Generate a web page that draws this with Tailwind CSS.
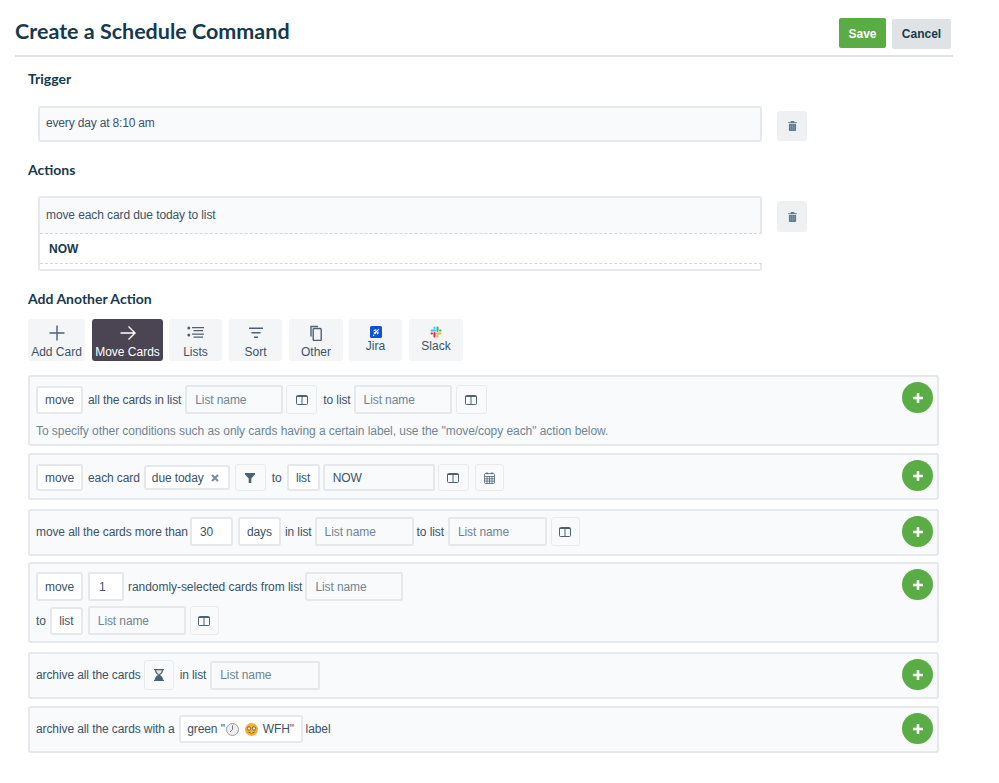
<!DOCTYPE html>
<html lang="en">
  <head>
    <meta charset="UTF-8" />
    <meta name="viewport" content="width=device-width, initial-scale=1.0" />
    <script src="https://cdn.jsdelivr.net/npm/@tailwindcss/browser@4"></script>
    <title>Create a Schedule Command</title>
  </head>
  <body class="bg-white font-['Liberation_Sans',Arial,sans-serif] text-[12px] tracking-[-0.1px] leading-[16px] text-[#3b5366] w-[999px] h-[783px] overflow-hidden">
    <!-- Header -->
    <header class="ml-[15px] w-[938px] h-[57px] border-b-2 border-[#e2e3e5] flex justify-between">
      <h1 class="font-['Lato',sans-serif] font-bold text-[21.5px] tracking-normal leading-[28px] text-[#17394d] mt-[17px]">Create a Schedule Command</h1>
      <div class="flex mr-[2px] tracking-normal">
        <button class="w-[47px] h-[30px] mt-[18px] pt-[1px] rounded-[2px] bg-[#5aac44] text-white font-bold text-[12px]">Save</button>
        <button class="w-[59px] h-[30px] mt-[19px] ml-[6px] rounded-[2px] bg-[#e0e3e6] text-[#17394d] font-bold text-[12px]">Cancel</button>
      </div>
    </header>

    <main class="pl-[28px]">
      <!-- Trigger -->
      <h2 class="font-['Lato',sans-serif] font-bold text-[14px] tracking-normal leading-[18px] text-[#17394d] pt-[13px]">Trigger</h2>
      <div class="flex mt-[18px] ml-[10px]">
        <div class="w-[724px] h-[36px] border-2 border-[#e6e8ec] rounded-[3px] bg-[#f9fafc] pl-[6px] pt-[7px] tracking-[-0.17px]">every day at 8:10 am</div>
        <button class="w-[30px] h-[30px] mt-[5px] ml-[15px] rounded-[2px] bg-[#eef0f2] flex items-center justify-center">
          <svg width="9" height="10" viewBox="0 0 10 11" fill="#5f7c90"><path d="M3.200 0h3.600l.5 1.200H10v1H0v-1h2.700zM1 3h8v7a1 1 0 0 1-1 1H2a1 1 0 0 1-1-1z" /><path d="M3 4v5.500M5 4v5.500M7 4v5.500" stroke="#8fa4b3" stroke-width=".7" /></svg>
        </button>
      </div>

      <!-- Actions -->
      <h2 class="font-['Lato',sans-serif] font-bold text-[14px] tracking-normal leading-[18px] text-[#17394d] mt-[19px]">Actions</h2>
      <div class="flex mt-[17px] ml-[10px]">
        <div class="w-[724px] h-[75px] border-2 border-[#e6e8ec] rounded-[3px] bg-white">
          <div class="h-[36px] bg-[#f9fafc] border-b border-r-2 border-dashed border-b-[#d5d8dd] border-r-[#e6e8ec] [border-right-style:solid] pl-[6px] pt-[9px] -mr-[2px]">move each card due today to list</div>
          <div class="h-[30px] bg-white border-b border-dashed border-[#d5d8dd] pl-[9px] pt-[7px] font-bold text-[12px] tracking-normal text-[#17394d] -mr-[2px]">NOW</div>
        </div>
        <button class="w-[30px] h-[31px] mt-[5px] ml-[15px] rounded-[2px] bg-[#eef0f2] flex items-center justify-center">
          <svg width="9" height="10" viewBox="0 0 10 11" fill="#5f7c90"><path d="M3.200 0h3.600l.5 1.200H10v1H0v-1h2.700zM1 3h8v7a1 1 0 0 1-1 1H2a1 1 0 0 1-1-1z" /><path d="M3 4v5.500M5 4v5.500M7 4v5.500" stroke="#8fa4b3" stroke-width=".7" /></svg>
        </button>
      </div>

      <!-- Add another action -->
      <h2 class="font-['Lato',sans-serif] font-bold text-[14px] tracking-normal leading-[18px] text-[#17394d] mt-[19px]">Add Another Action</h2>
      <div class="flex mt-[11px] h-[42px] tracking-normal">
        <button class="w-[57px] rounded-[3px] bg-[#f4f5f6] flex flex-col items-center pt-[6px]">
          <svg width="16" height="16" viewBox="0 0 16 16" fill="none" stroke="#4c6274" stroke-width="1.400"><path d="M8 .5v15M.5 8h15" /></svg>
          <span class="mt-[3px]">Add Card</span>
        </button>
        <button class="w-[71px] ml-[7px] rounded-[3px] bg-[#4a4453] text-white flex flex-col items-center pt-[6px]">
          <svg width="16" height="16" viewBox="0 0 16 16" fill="none" stroke="#fff" stroke-width="1.400"><path d="M.5 8h14.500M8.500 1.500 15 8l-6.500 6.500" /></svg>
          <span class="mt-[3px]">Move Cards</span>
        </button>
        <button class="w-[53px] ml-[6px] rounded-[3px] bg-[#f4f5f6] flex flex-col items-center pt-[6px]">
          <svg width="17" height="16" viewBox="0 0 17 16" fill="#4c6274"><circle cx="1.800" cy="3" r="1.500" /><circle cx="1.800" cy="10" r="1.500" /><path d="M5 2h12v1.300H5zM6.500 5h9.500v1.200H6.500zM5 8.500h12v1.300H5zM6.500 11.500h9.500v1.200H6.500z" /></svg>
          <span class="mt-[3px]">Lists</span>
        </button>
        <button class="w-[53px] ml-[7px] rounded-[3px] bg-[#f4f5f6] flex flex-col items-center pt-[6px]">
          <svg width="16" height="16" viewBox="0 0 16 16" fill="#4c6274"><path d="M1 2.500h14v1.500H1zM3.500 7h9v1.500h-9zM6 11.500h4V13H6z" /></svg>
          <span class="mt-[3px]">Sort</span>
        </button>
        <button class="w-[54px] ml-[7px] rounded-[3px] bg-[#f4f5f6] flex flex-col items-center pt-[6px]">
          <svg width="16" height="16" viewBox="0 0 16 16" fill="none" stroke="#4c6274" stroke-width="1.400"><path d="M3 11.500V1.500h7" /><rect x="5.200" y="3.500" width="8" height="12" rx="1" /></svg>
          <span class="mt-[3px]">Other</span>
        </button>
        <button class="w-[53px] ml-[6px] rounded-[3px] bg-[#f4f5f6] flex flex-col items-center pt-[7px]">
          <svg width="12" height="12" viewBox="0 0 12 12"><rect width="12" height="12" rx="1.500" fill="#0f52d1" /><path d="M3.500 7 8.500 3 9.300 2.700 9 3.500 5 8.500zM3.600 8.400l1 1-2 .9zM7.200 6.200 8.800 5.500 8.200 8 6.800 8.800zM5.800 4.800 6.500 3.200 4 3.800 3.200 5.200z" fill="#fff" /></svg>
          <span>Jira</span>
        </button>
        <button class="w-[54px] ml-[7px] rounded-[3px] bg-[#f4f5f6] flex flex-col items-center pt-[7px]">
          <svg width="12" height="12" viewBox="0 0 12 12" fill="none" stroke-width="2" stroke-linecap="round"><path d="M1.500 4.500H5M4.500 1.500V2" stroke="#36c5f0" /><path d="M7.500 1.500V5M10.500 4.500H10" stroke="#2eb67d" /><path d="M7 7.500h3.500M7.500 10.500V10" stroke="#ecb22e" /><path d="M4.500 7v3.500M1.500 7.500H2" stroke="#e01e5a" /></svg>
          <span>Slack</span>
        </button>
      </div>

      <div class="w-[911px] mt-[14px] flex flex-col">
        <!-- Row 1 -->
        <section class="h-[71px] border-2 border-[#e6e8ec] rounded-[3px] bg-[#f9fafc] flex justify-between pl-[6px] pr-[4px] pt-[8px]">
          <div>
            <div class="flex items-center">
              <span class="w-[47px] h-[28px] rounded-[3px] border-2 border-[#e6e8ec] bg-white flex items-center justify-center">move</span>
              <span class="ml-[5px]">all the cards in list</span>
              <span class="w-[98px] h-[29px] ml-[4px] rounded-[2px] border-2 border-[#e6e8ec] bg-[#f9fafc] pl-[8px] flex items-center text-[#6f8594]">List name</span>
              <span class="w-[31px] h-[29px] ml-[3px] rounded-[3px] border border-[#e8eaed] flex items-center justify-center">
                <svg width="12" height="10" viewBox="0 0 12 10" fill="none" stroke="#4c6274" stroke-width="1"><rect x=".5" y=".5" width="11" height="9" rx="1" /><path d="M6 .5v9M.5 1.500h11" /></svg>
              </span>
              <span class="ml-[6px]">to list</span>
              <span class="w-[98px] h-[29px] ml-[3px] rounded-[2px] border-2 border-[#e6e8ec] bg-[#f9fafc] pl-[8px] flex items-center text-[#6f8594]">List name</span>
              <span class="w-[31px] h-[29px] ml-[4px] rounded-[3px] border border-[#e8eaed] flex items-center justify-center">
                <svg width="12" height="10" viewBox="0 0 12 10" fill="none" stroke="#4c6274" stroke-width="1"><rect x=".5" y=".5" width="11" height="9" rx="1" /><path d="M6 .5v9M.5 1.500h11" /></svg>
              </span>
            </div>
            <p class="mt-[9px] tracking-[-0.06px] text-[#6f8594]">To specify other conditions such as only cards having a certain label, use the "move/copy each" action below.</p>
          </div>
          <button class="w-[31px] h-[31px] -mt-[3px] rounded-full bg-[#5aac44] flex items-center justify-center shrink-0">
            <svg width="10" height="10" viewBox="0 0 10 10" fill="#fff"><path d="M3.700 0h2.600v3.700H10v2.600H6.300V10H3.700V6.300H0V3.700h3.700z" /></svg>
          </button>
        </section>

        <!-- Row 2 -->
        <section class="h-[47px] mt-[7px] border-2 border-[#e6e8ec] rounded-[3px] bg-[#f9fafc] flex justify-between items-start pl-[6px] pr-[4px] pt-[9px]">
          <div class="flex items-center">
            <span class="w-[47px] h-[27px] rounded-[3px] border-2 border-[#e6e8ec] bg-white flex items-center justify-center">move</span>
            <span class="ml-[5px]">each card</span>
            <span class="w-[86px] h-[25px] ml-[4px] rounded-[3px] border-2 border-[#e6e8ec] bg-white pl-[6px] flex items-center">due today
              <svg class="ml-[7px]" width="8" height="8" viewBox="0 0 8 8" stroke="#7d8f9c" stroke-width="2.200"><path d="M1 1l6 6M7 1 1 7" /></svg>
            </span>
            <span class="w-[31px] h-[27px] ml-[5px] rounded-[3px] border border-[#e8eaed] flex items-center justify-center">
              <svg width="10" height="10" viewBox="0 0 10 10" fill="#4c6274"><path d="M0 0h10v1.500L6.300 5.500V10H3.700V5.500L0 1.500z" /></svg>
            </span>
            <span class="ml-[6px]">to</span>
            <span class="w-[33px] h-[27px] ml-[5px] rounded-[3px] border-2 border-[#e6e8ec] bg-white flex items-center justify-center">list</span>
            <span class="w-[112px] h-[27px] ml-[3px] rounded-[2px] border-2 border-[#e6e8ec] bg-[#f9fafc] pl-[8px] flex items-center">NOW</span>
            <span class="w-[31px] h-[27px] ml-[3px] rounded-[3px] border border-[#e8eaed] flex items-center justify-center">
              <svg width="12" height="10" viewBox="0 0 12 10" fill="none" stroke="#4c6274" stroke-width="1"><rect x=".5" y=".5" width="11" height="9" rx="1" /><path d="M6 .5v9M.5 1.500h11" /></svg>
            </span>
            <span class="w-[29px] h-[27px] ml-[6px] rounded-[3px] border border-[#e8eaed] flex items-center justify-center">
              <svg width="11" height="12" viewBox="0 0 11 12" fill="none" stroke="#4c6274" stroke-width=".8"><rect x=".5" y="1.500" width="10" height="10" rx="1" /><path d="M.5 4.500h10M.5 6.800h10M.5 9.100h10M3 4.500v7M5.500 4.500v7M8 4.500v7M3 0v2.500M8 0v2.500" /></svg>
            </span>
          </div>
          <button class="w-[31px] h-[31px] -mt-[4px] rounded-full bg-[#5aac44] flex items-center justify-center shrink-0">
            <svg width="10" height="10" viewBox="0 0 10 10" fill="#fff"><path d="M3.700 0h2.600v3.700H10v2.600H6.300V10H3.700V6.300H0V3.700h3.700z" /></svg>
          </button>
        </section>

        <!-- Row 3 -->
        <section class="h-[47px] mt-[9px] border-2 border-[#e6e8ec] rounded-[3px] bg-[#f9fafc] flex justify-between items-start pl-[6px] pr-[4px] pt-[6px]">
          <div class="flex items-center">
            <span>move all the cards more than</span>
            <span class="w-[43px] h-[29px] ml-[2px] rounded-[2px] border-2 border-[#e6e8ec] bg-white pl-[8px] flex items-center">30</span>
            <span class="w-[43px] h-[29px] ml-[5px] rounded-[3px] border-2 border-[#e6e8ec] bg-white flex items-center justify-center">days</span>
            <span class="ml-[4px]">in list</span>
            <span class="w-[99px] h-[29px] ml-[3px] rounded-[2px] border-2 border-[#e6e8ec] bg-[#f9fafc] pl-[8px] flex items-center text-[#6f8594]">List name</span>
            <span class="ml-[3px]">to list</span>
            <span class="w-[99px] h-[29px] ml-[4px] rounded-[2px] border-2 border-[#e6e8ec] bg-[#f9fafc] pl-[8px] flex items-center text-[#6f8594]">List name</span>
            <span class="w-[29px] h-[29px] ml-[4px] rounded-[3px] border border-[#e8eaed] flex items-center justify-center">
              <svg width="12" height="10" viewBox="0 0 12 10" fill="none" stroke="#4c6274" stroke-width="1"><rect x=".5" y=".5" width="11" height="9" rx="1" /><path d="M6 .5v9M.5 1.500h11" /></svg>
            </span>
          </div>
          <button class="w-[31px] h-[31px] -mt-[1px] rounded-full bg-[#5aac44] flex items-center justify-center shrink-0">
            <svg width="10" height="10" viewBox="0 0 10 10" fill="#fff"><path d="M3.700 0h2.600v3.700H10v2.600H6.300V10H3.700V6.300H0V3.700h3.700z" /></svg>
          </button>
        </section>

        <!-- Row 4 -->
        <section class="h-[81px] mt-[6px] border-2 border-[#e6e8ec] rounded-[3px] bg-[#f9fafc] flex justify-between items-start pl-[6px] pr-[4px] pt-[8px]">
          <div>
            <div class="flex items-center">
              <span class="w-[47px] h-[29px] rounded-[3px] border-2 border-[#e6e8ec] bg-white flex items-center justify-center">move</span>
              <span class="w-[36px] h-[29px] ml-[5px] rounded-[2px] border-2 border-[#e6e8ec] bg-white pl-[9px] flex items-center">1</span>
              <span class="ml-[4px] tracking-[-0.05px]">randomly-selected cards from list</span>
              <span class="w-[98px] h-[29px] ml-[3px] rounded-[2px] border-2 border-[#e6e8ec] bg-[#f9fafc] pl-[8px] flex items-center text-[#6f8594]">List name</span>
            </div>
            <div class="flex items-center mt-[5px]">
              <span>to</span>
              <span class="w-[33px] h-[28px] ml-[4px] rounded-[3px] border-2 border-[#e6e8ec] bg-white flex items-center justify-center">list</span>
              <span class="w-[98px] h-[29px] ml-[5px] rounded-[2px] border-2 border-[#e6e8ec] bg-[#f9fafc] pl-[8px] flex items-center text-[#6f8594]">List name</span>
              <span class="w-[29px] h-[29px] ml-[4px] rounded-[3px] border border-[#e8eaed] flex items-center justify-center">
                <svg width="12" height="10" viewBox="0 0 12 10" fill="none" stroke="#4c6274" stroke-width="1"><rect x=".5" y=".5" width="11" height="9" rx="1" /><path d="M6 .5v9M.5 1.500h11" /></svg>
              </span>
            </div>
          </div>
          <button class="w-[31px] h-[31px] -mt-[3px] rounded-full bg-[#5aac44] flex items-center justify-center shrink-0">
            <svg width="10" height="10" viewBox="0 0 10 10" fill="#fff"><path d="M3.700 0h2.600v3.700H10v2.600H6.300V10H3.700V6.300H0V3.700h3.700z" /></svg>
          </button>
        </section>

        <!-- Row 5 -->
        <section class="h-[47px] mt-[9px] border-2 border-[#e6e8ec] rounded-[3px] bg-[#f9fafc] flex justify-between items-start pl-[6px] pr-[4px] pt-[6px]">
          <div class="flex items-center">
            <span>archive all the cards</span>
            <span class="w-[30px] h-[30px] ml-[3px] rounded-[3px] border border-[#e8eaed] flex items-center justify-center">
              <svg width="10" height="12" viewBox="0 0 10 12" fill="#4c6274"><path d="M0 0h10v1.200H9C9 4 7.500 5 6 6c1.500 1 3 2 3 4.800h1V12H0v-1.200h1C1 8 2.500 7 4 6 2.500 5 1 4 1 1.200H0z" /><path d="M2.200 1.300h5.600C7.600 3.500 6 4.800 5 5.400 4 4.800 2.400 3.500 2.200 1.300z" fill="#dfe4e8" /></svg>
            </span>
            <span class="ml-[6px]">in list</span>
            <span class="w-[110px] h-[29px] ml-[4px] rounded-[2px] border-2 border-[#e6e8ec] bg-[#f9fafc] pl-[8px] flex items-center text-[#6f8594]">List name</span>
          </div>
          <button class="w-[31px] h-[31px] -mt-[1px] rounded-full bg-[#5aac44] flex items-center justify-center shrink-0">
            <svg width="10" height="10" viewBox="0 0 10 10" fill="#fff"><path d="M3.700 0h2.600v3.700H10v2.600H6.300V10H3.700V6.300H0V3.700h3.700z" /></svg>
          </button>
        </section>

        <!-- Row 6 -->
        <section class="h-[47px] mt-[7px] border-2 border-[#e6e8ec] rounded-[3px] bg-[#f9fafc] flex justify-between items-start pl-[6px] pr-[4px] pt-[7px]">
          <div class="flex items-center">
            <span>archive all the cards with a</span>
            <span class="w-[124px] h-[28px] ml-[4px] rounded-[3px] border-2 border-[#e6e8ec] bg-white flex items-center justify-center">green "
              <svg class="ml-[1px]" width="13" height="13" viewBox="0 0 13 13"><circle cx="6.500" cy="6.500" r="6" fill="#eceef0" stroke="#9aa1a6" /><path d="M6.500 2.500v4L4 9" stroke="#70777c" fill="none" /></svg>
              <svg class="ml-[6px]" width="13" height="13" viewBox="0 0 13 13"><circle cx="6.500" cy="6.500" r="6.500" fill="#f5b02c" /><circle cx="4" cy="5.500" r="1.700" fill="#fff3d0" stroke="#5e4a2a" stroke-width=".8" /><circle cx="9" cy="5.500" r="1.700" fill="#fff3d0" stroke="#5e4a2a" stroke-width=".8" /><path d="M3.500 9.200q3 2 6 0" stroke="#8a5a1c" stroke-width="1" fill="#fff" /></svg>
              <span class="ml-[5px]">WFH"</span>
            </span>
            <span class="ml-[3px]">label</span>
          </div>
          <button class="w-[31px] h-[31px] -mt-[2px] rounded-full bg-[#5aac44] flex items-center justify-center shrink-0">
            <svg width="10" height="10" viewBox="0 0 10 10" fill="#fff"><path d="M3.700 0h2.600v3.700H10v2.600H6.300V10H3.700V6.300H0V3.700h3.700z" /></svg>
          </button>
        </section>
      </div>
    </main>
  </body>
</html>
